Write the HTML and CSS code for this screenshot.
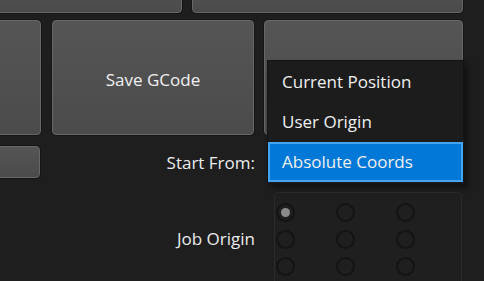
FILE: index.html
```html
<!DOCTYPE html>
<html lang="en">
<head>
    <meta charset="UTF-8">
    <title>Job Setup</title>
    <link rel="stylesheet" href="styles.css">
</head>
<body>
    <div class="panel">
        <div class="row row-top">
            <button class="btn btn-wide-left"></button>
            <button class="btn btn-wide-right"></button>
        </div>

        <div class="row row-main">
            <button class="btn btn-side"></button>
            <button class="btn btn-save">Save GCode</button>
            <button class="btn btn-extra"></button>
        </div>

        <div class="row row-start">
            <button class="btn btn-side btn-small"></button>
            <label class="field-label">Start From:</label>
            <div class="combo"></div>
        </div>

        <div class="row row-origin">
            <div class="spacer"></div>
            <label class="field-label">Job Origin</label>
            <div class="origin-box">
                <span class="radio checked"></span>
                <span class="radio"></span>
                <span class="radio"></span>
                <span class="radio"></span>
                <span class="radio"></span>
                <span class="radio"></span>
                <span class="radio"></span>
                <span class="radio"></span>
                <span class="radio"></span>
            </div>
        </div>

        <!-- open dropdown of the Start From combo -->
        <ul class="dropdown">
            <li>Current Position</li>
            <li>User Origin</li>
            <li class="selected">Absolute Coords</li>
        </ul>
    </div>
</body>
</html>
```

FILE: styles.css
```css
body {
    margin: 0;
    background-color: #1e1e1e;
    color: #f0f0f0;
    font-family: 'Open Sans', 'Noto Sans', sans-serif;
    font-size: 17px;
    overflow: hidden;
}
.panel {
    position: relative;
    display: flow-root;
    height: 281px;
    overflow: hidden;
}
.row {
    display: flex;
    margin-left: -59px;
}
.btn {
    display: block;
    flex: none;
    padding: 3px 0 0;
    font-family: inherit;
    font-size: inherit;
    color: #f0f0f0;
    background: linear-gradient(#555555, #4b4b4b);
    border: 1px solid #676767;
    border-radius: 4px;
    box-shadow: 0 0 0 1px #161616;
    cursor: pointer;
}
.row-top {
    height: 40px;
    margin-top: -27px;
}
.btn-wide-left {
    width: 241px;
}
.btn-wide-right {
    width: 271px;
    margin-left: 10px;
}
.row-main {
    height: 115px;
    margin-top: 7px;
}
.btn-side {
    width: 100px;
}
.btn-save {
    width: 202px;
    margin-left: 11px;
}
.btn-extra {
    width: 199px;
    margin-left: 10px;
}
.row-start {
    height: 32px;
    margin-top: 11px;
    align-items: center;
}
.btn-small {
    width: 99px;
    height: 32px;
}
.field-label {
    width: 203px;
    margin-left: 12px;
    text-align: right;
    color: #ececec;
}
.combo {
    width: 195px;
    height: 38px;
    margin-left: 14px;
}
.row-origin {
    margin-top: 14px;
}
.row-origin .spacer {
    width: 99px;
}
.row-origin .field-label {
    margin-top: 35px;
}
.origin-box {
    margin-left: 19px;
    width: 188px;
    height: 110px;
    padding: 10px 0 0 1px;
    box-sizing: border-box;
    display: grid;
    grid-template-columns: repeat(3, 60px);
    grid-auto-rows: 19px;
    row-gap: 8px;
    background: #1f1f1f;
    border: 1px solid #2b2b2b;
    border-radius: 4px;
}
.radio {
    width: 15px;
    height: 15px;
    border: 2px solid #141414;
    border-radius: 50%;
    background: #1f1f1f;
    position: relative;
}
.radio.checked::after {
    content: "";
    position: absolute;
    left: 3px;
    top: 3px;
    width: 9px;
    height: 9px;
    border-radius: 50%;
    background: #8b8b8b;
}
.dropdown {
    position: absolute;
    left: 267px;
    top: 60px;
    width: 197px;
    margin: 0;
    padding: 1px 0;
    list-style: none;
    background: #1c1c1c;
    border: 1px solid #141414;
    box-sizing: border-box;
    box-shadow: 4px 4px 6px rgba(0, 0, 0, 0.45);
}
.dropdown li {
    height: 40px;
    line-height: 40px;
    padding-left: 14px;
    box-sizing: border-box;
}
.dropdown li.selected {
    background: #0078d7;
    border: 2px solid #44a6f2;
    line-height: 36px;
    padding-left: 12px;
}
```
